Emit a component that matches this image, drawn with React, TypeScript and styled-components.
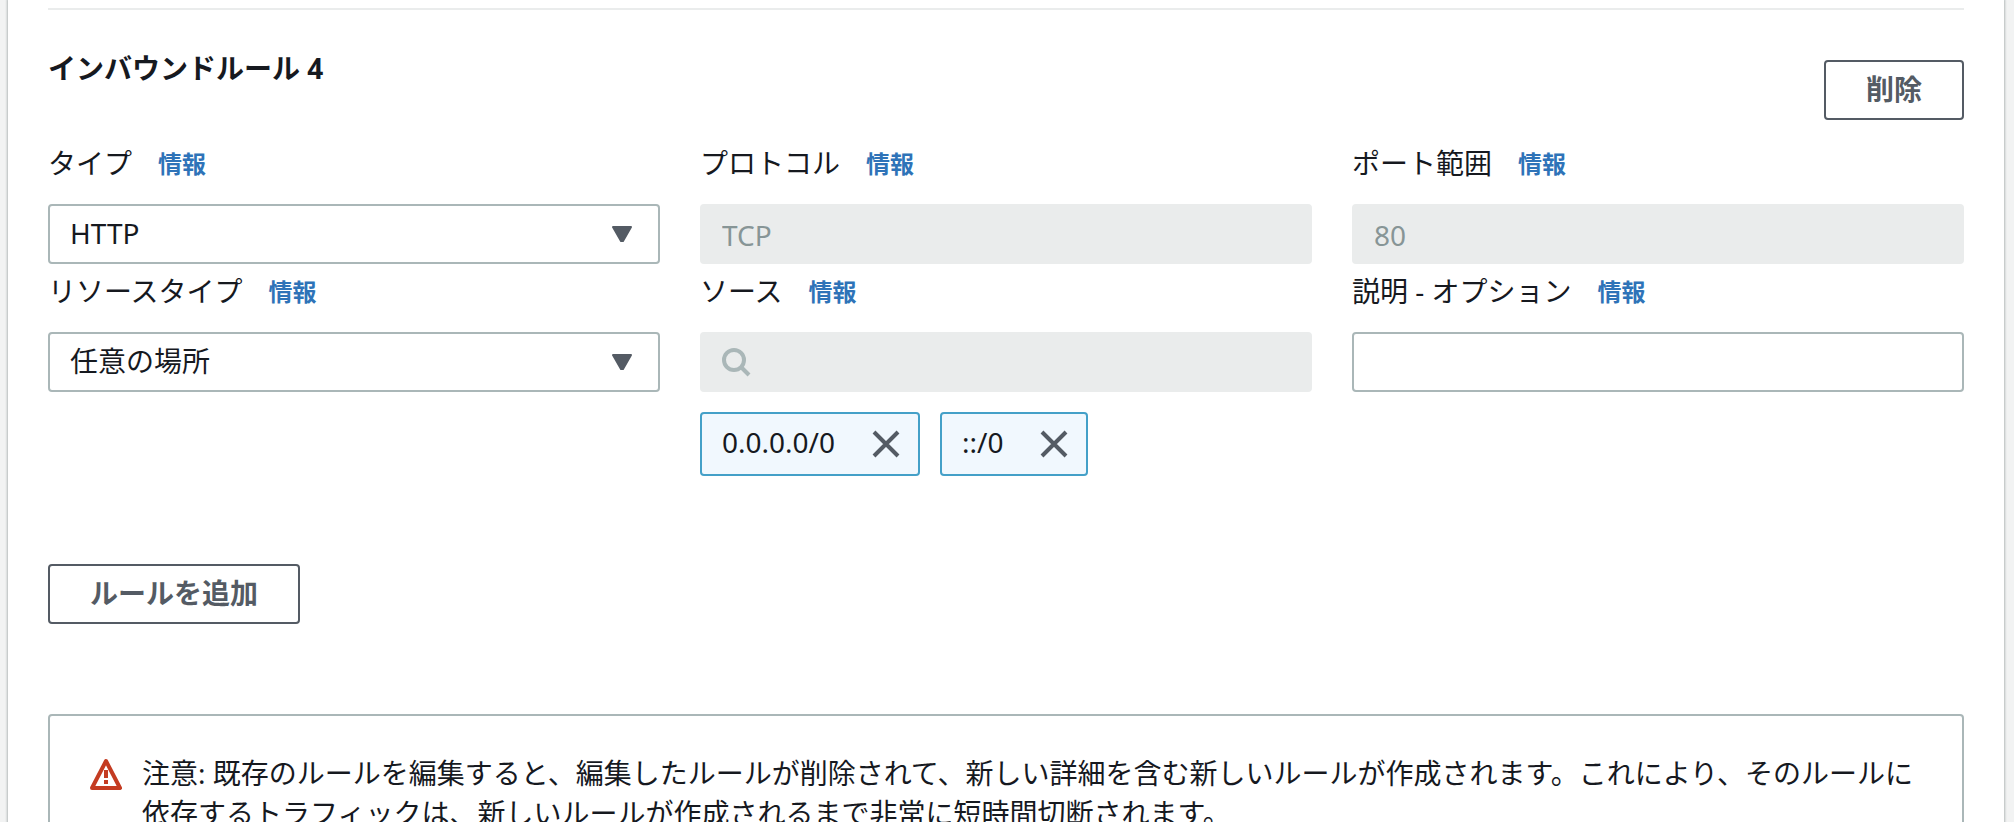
import React from "react";
import styled, { createGlobalStyle } from "styled-components";

const GlobalStyle = createGlobalStyle`
  *, *::before, *::after { box-sizing: border-box; }
  body {
    margin: 0;
    background: #f2f3f3;
    color: #16191f;
    font-family: "Noto Sans", "Noto Sans CJK JP", sans-serif;
    font-size: 28px;
    line-height: 40px;
  }
  button, input, select { font: inherit; }
`;

const Page = styled.main`
  height: 100vh;
  padding: 0 10px 0 8px;
  overflow: hidden;
`;

const Panel = styled.section`
  padding: 8px 40px 40px;
  background: #fff;
  box-shadow: 0 0 2px 1px #b4bbbb;
`;

const Rule = styled.div`
  border-top: 2px solid #eaecec;
  padding-top: 38px;
`;

const RuleHeader = styled.header`
  display: flex;
  justify-content: space-between;
  align-items: flex-start;
`;

const RuleTitle = styled.h2`
  margin: 0;
  font-size: 28px;
  line-height: 40px;
  font-weight: 700;
`;

const Button = styled.button<{ $spaced?: boolean }>`
  height: 60px;
  margin-top: ${(p) => (p.$spaced ? "12px" : "0")};
  padding: 0 40px 2px;
  border: 2px solid #545b64;
  border-radius: 4px;
  background: #fff;
  color: #545b64;
  font-weight: 700;
  line-height: 40px;
  cursor: pointer;
`;

const FieldGrid = styled.div`
  display: grid;
  grid-template-columns: repeat(3, minmax(0, 1fr));
  column-gap: 40px;
  margin-top: 16px;
  align-items: start;
`;

const LabelRow = styled.div`
  display: flex;
  align-items: center;
  gap: 26px;
  height: 68px;
  padding-bottom: 14px;
`;

const InfoLink = styled.a`
  padding-top: 2px;
  color: #2e73b8;
  font-size: 24px;
  font-weight: 700;
  text-decoration: none;
`;

const TextInput = styled.input<{ $iconSpace?: boolean }>`
  display: block;
  width: 100%;
  height: 60px;
  padding: 2px 20px 0 ${(p) => (p.$iconSpace ? "68px" : "20px")};
  border: 2px solid #aab7b8;
  border-radius: 4px;
  background: #fff;
  color: #16191f;

  &:disabled {
    border-color: #eaecec;
    background: #eaecec;
    color: #879596;
    opacity: 1;
  }
`;

const ControlWrap = styled.div`
  position: relative;

  > svg {
    position: absolute;
    top: 0;
    bottom: 0;
    margin: auto 0;
    pointer-events: none;
  }
`;

const Select = styled.select`
  display: block;
  width: 100%;
  height: 60px;
  padding: 0 60px 2px 20px;
  border: 2px solid #aab7b8;
  border-radius: 4px;
  background: #fff;
  color: #16191f;
  appearance: none;
`;

const Caret = styled.svg`
  right: 28px;
`;

const SearchGlyph = styled.svg`
  left: 20px;
`;

const TokenList = styled.ul`
  display: flex;
  gap: 20px;
  margin: 20px 0 0;
  padding: 0;
  list-style: none;
`;

const Token = styled.li`
  display: flex;
  align-items: center;
  gap: 35px;
  height: 64px;
  padding: 0 16px 0 20px;
  border: 2px solid #44a0c8;
  border-radius: 4px;
  background: #f1f8fe;
`;

const TokenValue = styled.span`
  padding-bottom: 4px;
`;

const DismissButton = styled.button`
  display: flex;
  padding: 0;
  border: 0;
  background: none;
  color: #545b64;
  cursor: pointer;
`;

const Actions = styled.div`
  margin: 88px 0 90px;
`;

const Alert = styled.div`
  display: flex;
  gap: 20px;
  padding: 37px 38px 38px 40px;
  border: 2px solid #aab7b8;
  border-radius: 4px;

  > svg {
    flex: none;
    margin-top: 5px;
  }
`;

const AlertText = styled.p`
  margin: 0;
`;

function Label({ id, text }: { id: string; text: string }) {
  return (
    <LabelRow>
      <label htmlFor={id}>{text}</label>
      <InfoLink href="#info">情報</InfoLink>
    </LabelRow>
  );
}

function SelectField({ id, text, options }: { id: string; text: string; options: string[] }) {
  return (
    <div>
      <Label id={id} text={text} />
      <ControlWrap>
        <Select id={id}>
          {options.map((option) => (
            <option key={option}>{option}</option>
          ))}
        </Select>
        <Caret width="20" height="16" viewBox="0 0 20 16" aria-hidden="true">
          <path d="M1 1h18L11 15H9z" fill="#545b64" stroke="#545b64" strokeWidth="2" strokeLinejoin="round" />
        </Caret>
      </ControlWrap>
    </div>
  );
}

function TokenItem({ value }: { value: string }) {
  return (
    <Token>
      <TokenValue>{value}</TokenValue>
      <DismissButton type="button" aria-label={`${value} を削除`}>
        <svg width="32" height="32" viewBox="0 0 32 32" aria-hidden="true">
          <path d="M4 4l24 24M28 4L4 28" fill="none" stroke="currentColor" strokeWidth="4" />
        </svg>
      </DismissButton>
    </Token>
  );
}

export default function App() {
  return (
    <>
      <GlobalStyle />
      <Page>
        <Panel>
          <Rule>
            <RuleHeader>
              <RuleTitle>インバウンドルール 4</RuleTitle>
              <Button type="button" $spaced>削除</Button>
            </RuleHeader>
            <FieldGrid>
              <SelectField id="type" text="タイプ" options={["HTTP", "HTTPS", "SSH"]} />
              <div>
                <Label id="protocol" text="プロトコル" />
                <TextInput id="protocol" disabled defaultValue="TCP" />
              </div>
              <div>
                <Label id="port" text="ポート範囲" />
                <TextInput id="port" disabled defaultValue="80" />
              </div>
              <SelectField id="resource" text="リソースタイプ" options={["任意の場所", "カスタム"]} />
              <div>
                <Label id="source" text="ソース" />
                <ControlWrap>
                  <TextInput id="source" type="search" disabled $iconSpace />
                  <SearchGlyph width="32" height="32" viewBox="0 0 32 32" aria-hidden="true">
                    <circle cx="14" cy="14" r="10" fill="none" stroke="#aab7b8" strokeWidth="4" />
                    <path d="M21 21l8 8" fill="none" stroke="#aab7b8" strokeWidth="4" />
                  </SearchGlyph>
                </ControlWrap>
                <TokenList>
                  <TokenItem value="0.0.0.0/0" />
                  <TokenItem value="::/0" />
                </TokenList>
              </div>
              <div>
                <Label id="description" text="説明 - オプション" />
                <TextInput id="description" />
              </div>
            </FieldGrid>
          </Rule>
          <Actions>
            <Button type="button">ルールを追加</Button>
          </Actions>
          <Alert role="alert">
            <svg width="32" height="32" viewBox="0 0 32 32" aria-hidden="true">
              <path d="M16 3L30 30H2z" fill="none" stroke="#c43c22" strokeWidth="4" strokeLinejoin="round" />
              <path d="M16 12v8M16 22v4" fill="none" stroke="#c43c22" strokeWidth="4" />
            </svg>
            <AlertText>
              注意: 既存のルールを編集すると、編集したルールが削除されて、新しい詳細を含む新しいルールが作成されます。これにより、そのルールに依存するトラフィックは、新しいルールが作成されるまで非常に短時間切断されます。
            </AlertText>
          </Alert>
        </Panel>
      </Page>
    </>
  );
}
